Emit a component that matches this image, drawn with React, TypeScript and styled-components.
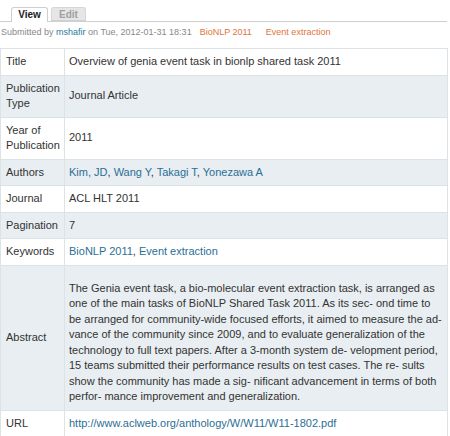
import React from "react";
import styled, { createGlobalStyle } from "styled-components";

const Global = createGlobalStyle`
  html, body { margin: 0; padding: 0; background: #fff; }
  body { font-family: "Liberation Sans", Arial, Helvetica, sans-serif; color: #333; }
`;

const Page = styled.div`
  width: 450px;
  height: 436px;
  overflow: hidden;
`;

const Tabs = styled.ul`
  display: flex;
  align-items: flex-end;
  gap: 3px;
  list-style: none;
  margin: 0;
  padding: 7px 0 0 11px;
  width: 436px;
  border-bottom: 1px solid #cfcfcf;
  height: 14px;
`;

const Tab = styled.li<{ $active?: boolean }>`
  box-sizing: border-box;
  height: ${(p) => (p.$active ? "15px" : "14px")};
  margin-bottom: ${(p) => (p.$active ? "-1px" : "0")};
  font-size: 10px;
  font-weight: bold;
  line-height: 13px;
  border: 1px solid ${(p) => (p.$active ? "#cfcfcf" : "#d6d6d6")};
  border-bottom: ${(p) => (p.$active ? "none" : "1px solid #cfcfcf")};
  border-radius: 3px 3px 0 0;
  background: ${(p) => (p.$active ? "#fff" : "#e6e6e6")};
  color: ${(p) => (p.$active ? "#222" : "#a0a0a0")};
  width: ${(p) => (p.$active ? "37px" : "35px")};
  text-align: center;
`;

const Meta = styled.div`
  padding: 4px 0 0 1px;
  font-size: 9px;
  line-height: 12px;
  color: #888;
  height: 26px;
  box-sizing: border-box;
  white-space: nowrap;
`;

const MetaLink = styled.a`
  color: #2b7a9b;
  text-decoration: none;
`;

const Term = styled.a`
  color: #e0743c;
  text-decoration: none;
  margin-left: 8px;
  & + & {
    margin-left: 14px;
  }
`;

const Table = styled.table`
  width: 448px;
  table-layout: fixed;
  border-collapse: collapse;
  font-size: 11px;
  line-height: 15.5px;
`;

const Row = styled.tr<{ $alt?: boolean }>`
  background: ${(p) => (p.$alt ? "#e8eef1" : "#fff")};
`;

const Label = styled.th`
  width: 55px;
  padding: 5px 3px 5px 5px;
  text-align: left;
  font-weight: normal;
  vertical-align: middle;
  border: 1px solid #dce3e6;
  color: #333;
`;

const Value = styled.td`
  padding: 5px 2px 5px 4px;
  vertical-align: middle;
  border: 1px solid #dce3e6;
  color: #333;
  overflow: hidden;
`;

const Link = styled.a`
  color: #2b6f95;
  text-decoration: none;
`;

const Para = styled.p`
  margin: 10px 0 0;
  font-size: 11px;
  white-space: nowrap;
`;

const abstractLines = [
  "The Genia event task, a bio-molecular event extraction task, is arranged as",
  "one of the main tasks of BioNLP Shared Task 2011. As its sec- ond time to",
  "be arranged for community-wide focused efforts, it aimed to measure the ad-",
  "vance of the community since 2009, and to evaluate generalization of the",
  "technology to full text papers. After a 3-month system de- velopment period,",
  "15 teams submitted their performance results on test cases. The re- sults",
  "show the community has made a sig- nificant advancement in terms of both",
  "perfor- mance improvement and generalization.",
];

export default function App() {
  return (
    <Page>
      <Global />
      <Tabs>
        <Tab $active>View</Tab>
        <Tab>Edit</Tab>
      </Tabs>
      <Meta>
        Submitted by <MetaLink href="#">mshafir</MetaLink> on Tue, 2012-01-31 18:31
        <Term href="#">BioNLP 2011</Term>
        <Term href="#">Event extraction</Term>
      </Meta>
      <Table>
        <tbody>
          <Row>
            <Label>Title</Label>
            <Value>Overview of genia event task in bionlp shared task 2011</Value>
          </Row>
          <Row $alt>
            <Label>Publication Type</Label>
            <Value>Journal Article</Value>
          </Row>
          <Row>
            <Label>Year of Publication</Label>
            <Value>2011</Value>
          </Row>
          <Row $alt>
            <Label>Authors</Label>
            <Value>
              <Link href="#">Kim, JD</Link>, <Link href="#">Wang Y</Link>,{" "}
              <Link href="#">Takagi T</Link>, <Link href="#">Yonezawa A</Link>
            </Value>
          </Row>
          <Row>
            <Label>Journal</Label>
            <Value>ACL HLT 2011</Value>
          </Row>
          <Row $alt>
            <Label>Pagination</Label>
            <Value>7</Value>
          </Row>
          <Row>
            <Label>Keywords</Label>
            <Value>
              <Link href="#">BioNLP 2011</Link>, <Link href="#">Event extraction</Link>
            </Value>
          </Row>
          <Row $alt>
            <Label>Abstract</Label>
            <Value>
              <Para>
                {abstractLines.map((line, i) => (
                  <React.Fragment key={i}>
                    {line}
                    {i < abstractLines.length - 1 && <br />}
                  </React.Fragment>
                ))}
              </Para>
            </Value>
          </Row>
          <Row>
            <Label>URL</Label>
            <Value>
              <Link href="#">http://www.aclweb.org/anthology/W/W11/W11-1802.pdf</Link>
            </Value>
          </Row>
        </tbody>
      </Table>
    </Page>
  );
}
